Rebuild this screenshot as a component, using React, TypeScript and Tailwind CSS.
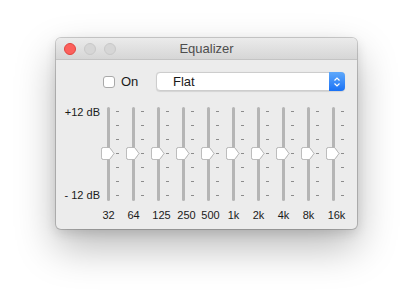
import React from "react";

const bands: { label: string; shift: string }[] = [
  { label: "32", shift: "" },
  { label: "64", shift: "" },
  { label: "125", shift: "translate-x-[3px]" },
  { label: "250", shift: "translate-x-[3px]" },
  { label: "500", shift: "translate-x-[2px]" },
  { label: "1k", shift: "" },
  { label: "2k", shift: "" },
  { label: "4k", shift: "" },
  { label: "8k", shift: "" },
  { label: "16k", shift: "translate-x-[3px]" },
];

function Thumb() {
  return (
    <svg width="14" height="13" viewBox="0 0 14 13" className="absolute left-[-1px] top-[40px] drop-shadow-[0_0.5px_0.5px_rgba(0,0,0,0.25)]">
      <path
        d="M2.5 0.5 H8.5 L13 6.5 L8.5 12.5 H2.5 Q0.5 12.5 0.5 10.5 V2.5 Q0.5 0.5 2.5 0.5 Z"
        fill="#ffffff"
        stroke="#b4b4b4"
        strokeWidth="0.8"
      />
    </svg>
  );
}

function Slider() {
  return (
    <div className="flex h-[94px] w-[25px] flex-row">
      <div className="relative flex h-full w-[13px] justify-center">
        <div className="h-full w-[3px] rounded-full bg-[#b5b5b5]" />
        <Thumb />
      </div>
      <div className="ml-[1px] flex h-full flex-col justify-between py-[4.5px]">
        {[0, 1, 2, 3, 4, 5, 6].map((i) => (
          <div key={i} className="h-[1px] w-[3px] bg-[#8c8c8c]" />
        ))}
      </div>
    </div>
  );
}

export default function App() {
  return (
    <div
      className="h-[303px] w-[413px] bg-white pl-[56px] pt-[38px]"
      style={{ fontFamily: '"Liberation Sans", Arial, sans-serif' }}
    >
      <div className="flex h-[191px] w-[301px] flex-col overflow-hidden rounded-[5px] bg-[#ececec] shadow-[0_0_0_1px_rgba(0,0,0,0.18),0_18px_40px_rgba(0,0,0,0.28),0_4px_12px_rgba(0,0,0,0.12)]">
        {/* Title bar */}
        <div className="relative flex h-[22px] items-center border-b border-[#c4c4c4] bg-gradient-to-b from-[#ebebeb] to-[#d6d6d6] pl-[8px]">
          <div className="flex gap-[8px]">
            <div className="h-[12px] w-[12px] rounded-full border border-[#e0443e] bg-[#fc605c]" />
            <div className="h-[12px] w-[12px] rounded-full border border-[#c8c8c8] bg-[#d6d6d6]" />
            <div className="h-[12px] w-[12px] rounded-full border border-[#c8c8c8] bg-[#d6d6d6]" />
          </div>
          <div className="absolute inset-0 flex items-center justify-center text-[13px] text-[#4d4d4d]">
            Equalizer
          </div>
        </div>

        {/* Controls row */}
        <div className="mt-[12px] flex items-center pl-[47px]">
          <div className="h-[12px] w-[12px] shrink-0 rounded-[3px] border border-[#a9a9a9] bg-white" />
          <span className="ml-[6px] w-[35px] shrink-0 text-[13px] text-[#1a1a1a]">On</span>
          <div className="flex h-[19px] w-[189px] shrink-0 items-stretch rounded-[4px] border border-[#cdcdcd] bg-white shadow-[0_0.5px_1px_rgba(0,0,0,0.1)]">
            <div className="flex flex-1 items-center pl-[16px] text-[13px] text-[#1a1a1a]">Flat</div>
            <div className="-my-[1px] -mr-[1px] flex w-[16px] items-center justify-center rounded-r-[4px] bg-gradient-to-b from-[#5ea8fb] to-[#1871f5]">
              <svg width="8" height="12" viewBox="0 0 8 12">
                <path d="M1.5 4.5 L4 2 L6.5 4.5" fill="none" stroke="#fff" strokeWidth="1.2" />
                <path d="M1.5 7.5 L4 10 L6.5 7.5" fill="none" stroke="#fff" strokeWidth="1.2" />
              </svg>
            </div>
          </div>
        </div>

        {/* Sliders */}
        <div className="mt-[15px] flex">
          <div className="flex h-[94px] w-[44px] flex-col justify-between text-right text-[11px] leading-[11px] text-[#1a1a1a]">
            <span>+12 dB</span>
            <span>- 12 dB</span>
          </div>
          <div className="ml-[2px] flex">
            {bands.map((b) => (
              <Slider key={b.label} />
            ))}
          </div>
        </div>
        <div className="mt-[9px] flex pl-[45px]">
          {bands.map((b) => (
            <div key={b.label} className="w-[25px] pr-[10px] text-center text-[11px] leading-[11px] text-[#1a1a1a]">
              <span className={"-mx-[6px] inline-block whitespace-nowrap " + b.shift}>{b.label}</span>
            </div>
          ))}
        </div>
      </div>
    </div>
  );
}
